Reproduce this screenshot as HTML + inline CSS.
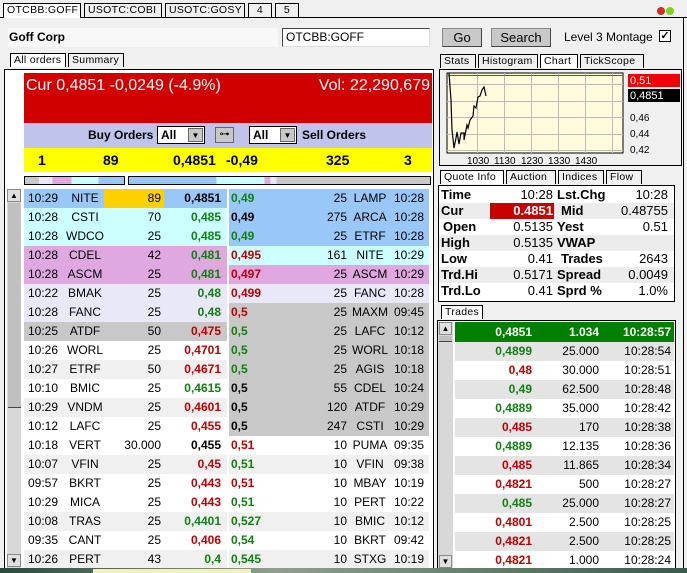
<!DOCTYPE html>
<html><head><meta charset="utf-8"><style>
*{box-sizing:border-box;margin:0;padding:0}
body{width:687px;height:573px;overflow:hidden;background:#f0f0f0;font-family:"Liberation Sans",sans-serif;font-size:12px;color:#000;position:relative}
.a{position:absolute}
.tab{position:absolute;height:14px;border:1px solid #000;border-bottom:none;background:#f0f0f0;font-size:10.5px;letter-spacing:0.3px;padding:0 3px;line-height:13px;white-space:nowrap;overflow:hidden}
.tab.sel{background:#fff}
.row{position:absolute;height:19px;line-height:19px;font-size:12px}
.row span{position:absolute;top:0}
.b{font-weight:bold}
.g{color:#108010}.r{color:#c00000}.k{color:#000}
.btn{position:absolute;background:#c8c8c8;border:1px solid #888;border-right-color:#444;border-bottom-color:#444;text-align:center;font-size:13px;line-height:17px}
.sel2{position:absolute;background:#fff;border:1px solid #000;height:18px;font-weight:bold;font-size:12px;line-height:16px;padding-left:3px}
.sel2 i{position:absolute;right:1px;top:1px;width:15px;height:14px;background:#c8c8c8;border:1px solid #666;font-style:normal;font-size:8px;text-align:center;line-height:13px}
.q{position:absolute;left:0;width:235px;height:16px;line-height:16px;font-size:13px}
.q span{position:absolute;top:0}
</style></head><body>
<div class="a" style="left:0;top:17px;width:687px;height:1px;background:#000"></div>
<div class="tab sel" style="left:3px;top:3px;width:78px;height:15px">OTCBB:GOFF</div>
<div class="tab" style="left:84px;top:3px;width:78px">USOTC:COBI</div>
<div class="tab" style="left:165px;top:3px;width:80px">USOTC:GOSY</div>
<div class="tab" style="left:248px;top:3px;width:24px;text-align:center">4</div>
<div class="tab" style="left:275px;top:3px;width:24px;text-align:center">5</div>
<div class="a" style="left:657px;top:7px;width:8px;height:8px;border-radius:50%;background:#d03020"></div>
<div class="a" style="left:666px;top:7px;width:8px;height:8px;border-radius:50%;background:#80d020"></div>
<div class="a" style="left:683px;top:18px;width:1px;height:555px;background:#000"></div>

<div class="a" style="left:8px;top:28px;width:270px;height:19px;background:#f8f8f8;font-weight:bold;font-size:12px;line-height:19px;padding-left:1px">Goff Corp</div>
<div class="a" style="left:282px;top:28px;width:148px;height:19px;background:#fff;border:1px solid #888;border-color:#444 #ddd #ddd #444;font-size:12px;line-height:17px;padding-left:3px">OTCBB:GOFF</div>
<div class="btn" style="left:442px;top:28px;width:40px;height:19px">Go</div>
<div class="btn" style="left:491px;top:28px;width:60px;height:19px">Search</div>
<div class="a" style="left:564px;top:29px;font-size:12px;line-height:17px">Level 3 Montage</div>
<div class="a" style="left:659px;top:30px;width:12px;height:12px;border:1px solid #000;background:#fff;font-size:11px;line-height:10px;text-align:center;font-weight:bold">✓</div>

<div class="tab sel" style="left:10px;top:53px;width:56px">All orders</div>
<div class="tab" style="left:68px;top:53px;width:56px">Summary</div>
<div class="a" style="left:4px;top:69px;width:430px;height:500px;border:1px solid #000;background:#fff"></div>
<div class="a" style="left:24px;top:73px;width:408px;height:50px;background:#d00000;color:#fff;font-size:16px"><span class="a" style="left:2px;top:4px">Cur 0,4851 -0,0249 (-4.9%)</span><span class="a" style="right:2px;top:4px">Vol: 22,290,679</span></div>
<div class="a" style="left:24px;top:123px;width:408px;height:25px;background:#c0c4ec"></div>
<div class="a b" style="left:88px;top:128px;font-size:12px">Buy Orders</div>
<div class="sel2" style="left:157px;top:126px;width:48px">All<i>▼</i></div>
<div class="a" style="left:215px;top:127px;width:19px;height:16px;background:#c8c8c8;border:1px solid #666;font-size:10px;text-align:center;line-height:14px">⊶</div>
<div class="sel2" style="left:249px;top:126px;width:48px">All<i>▼</i></div>
<div class="a b" style="left:302px;top:128px;font-size:12px">Sell Orders</div>
<div class="a b" style="left:24px;top:148px;width:408px;height:24px;background:#ffff00;font-size:14px;line-height:24px">
<span class="a" style="left:14px">1</span><span class="a" style="left:79px">89</span><span class="a" style="left:149px">0,4851</span><span class="a" style="left:202px">-0,49</span><span class="a" style="left:302px">325</span><span class="a" style="left:380px">3</span></div>
<div class="a" style="left:24px;top:176px;width:101px;height:9px;border:1px solid #000;background:linear-gradient(90deg,#c8c8c8 0 14%,#e8e8f8 14% 28%,#e0a8e0 28% 47%,#ccffff 47% 74%,#99c8f8 74%)"></div>
<div class="a" style="left:128px;top:176px;width:303px;height:9px;border:1px solid #000;background:linear-gradient(90deg,#99c8f8 0 29%,#ccffff 29% 45%,#e0a8e0 45% 47%,#e8e8f8 47% 49%,#c8c8c8 49%)"></div>
<div class="a" style="left:7px;top:189px;width:14px;height:380px;background:#d8d8d8"></div>
<div class="a" style="left:7px;top:189px;width:14px;height:13px;background:#e0e0e0;border:1px solid #888;font-size:8px;text-align:center;line-height:11px">▲</div>
<div class="a" style="left:8px;top:203px;width:13px;height:205px;background:#c0c0c0;border-bottom:1px solid #444"></div>
<div class="a" style="left:7px;top:554px;width:14px;height:13px;background:#e0e0e0;border:1px solid #888;font-size:8px;text-align:center;line-height:11px">▼</div>
<div id="rows"></div>

<div class="tab" style="left:440px;top:54px;width:36px">Stats</div>
<div class="tab" style="left:478px;top:54px;width:60px">Histogram</div>
<div class="tab sel" style="left:540px;top:54px;width:38px">Chart</div>
<div class="tab" style="left:580px;top:54px;width:64px">TickScope</div>
<div class="a" style="left:439px;top:69px;width:243px;height:97px;border:1px solid #000;background:#f0f0f0"></div>
<svg class="a" style="left:440px;top:70px" width="241" height="95">
<rect x="7" y="3" width="176" height="80" fill="#fffbdc" stroke="#000" stroke-width="1"/>
<g stroke="#bbb" stroke-width="1">
<line x1="37.5" y1="3" x2="37.5" y2="83"/><line x1="64.5" y1="3" x2="64.5" y2="83"/><line x1="91.5" y1="3" x2="91.5" y2="83"/><line x1="118.5" y1="3" x2="118.5" y2="83"/><line x1="145.5" y1="3" x2="145.5" y2="83"/><line x1="172.5" y1="3" x2="172.5" y2="83"/>
<line x1="7" y1="14.5" x2="183" y2="14.5"/><line x1="7" y1="31.5" x2="183" y2="31.5"/><line x1="7" y1="47.5" x2="183" y2="47.5"/><line x1="7" y1="64.5" x2="183" y2="64.5"/><line x1="7" y1="80.5" x2="183" y2="80.5"/></g>
<line x1="8" y1="5.5" x2="182" y2="5.5" stroke="#e02020"/>
<polyline fill="none" stroke="#000" stroke-width="1.2" points="9,3 11,30 12,60 14,78 16,68 17,62 19,74 21,63 24,63 24,70 27,55 28,58 30,50 33,46 34,36 36,38 38,27 40,26 42,20 44,17 46,26"/>
<rect x="188" y="4" width="52" height="13" fill="#f00000"/><text x="190" y="14" fill="#fff" font-size="11" font-family="Liberation Sans">0,51</text>
<rect x="188" y="19" width="52" height="13" fill="#000"/><text x="190" y="29" fill="#fff" font-size="11" font-family="Liberation Sans">0,4851</text>
<g font-size="10" font-family="Liberation Sans" fill="#000"><text x="190" y="51">0,46</text><text x="190" y="67">0,44</text><text x="190" y="83">0,42</text>
<text x="27" y="94">1030</text><text x="54" y="94">1130</text><text x="81" y="94">1230</text><text x="108" y="94">1330</text><text x="135" y="94">1430</text></g>
</svg>
<div class="tab sel" style="left:440px;top:170px;width:64px">Quote Info</div>
<div class="tab" style="left:506px;top:170px;width:50px">Auction</div>
<div class="tab" style="left:558px;top:170px;width:46px">Indices</div>
<div class="tab" style="left:606px;top:170px;width:36px">Flow</div>
<div class="a" style="left:438px;top:185px;width:237px;height:117px;border:1px solid #000;background:#fff">
<div class="q" style="top:1px"><span class="b" style="left:2px">Time</span><span style="right:121px">10:28</span><span class="b" style="left:118px">Lst.Chg</span><span style="right:6px">10:28</span></div>
<div class="q" style="top:17px;background:#ececec"><span class="a" style="left:51px;width:64px;height:16px;background:#c80000"></span><span class="b" style="left:2px">Cur</span><span class="b" style="right:121px;color:#fff">0.4851</span><span class="b" style="left:122px">Mid</span><span style="right:6px">0.48755</span></div>
<div class="q" style="top:33px"><span class="b" style="left:4px">Open</span><span style="right:121px">0.5135</span><span class="b" style="left:118px">Yest</span><span style="right:6px">0.51</span></div>
<div class="q" style="top:49px;background:#ececec"><span class="b" style="left:2px">High</span><span style="right:121px">0.5135</span><span class="b" style="left:118px">VWAP</span></div>
<div class="q" style="top:65px"><span class="b" style="left:2px">Low</span><span style="right:121px">0.41</span><span class="b" style="left:122px">Trades</span><span style="right:6px">2643</span></div>
<div class="q" style="top:81px;background:#ececec"><span class="b" style="left:2px">Trd.Hi</span><span style="right:121px">0.5171</span><span class="b" style="left:118px">Spread</span><span style="right:6px">0.0049</span></div>
<div class="q" style="top:97px"><span class="b" style="left:2px">Trd.Lo</span><span style="right:121px">0.41</span><span class="b" style="left:118px">Sprd %</span><span style="right:6px">1.0%</span></div>
</div>
<div class="tab sel" style="left:441px;top:305px;width:42px">Trades</div>
<div class="a" style="left:437px;top:320px;width:239px;height:250px;border:1px solid #000;background:#fff"></div>
<div class="a" style="left:438px;top:322px;width:15px;height:246px;background:#d8d8d8"></div>
<div class="a" style="left:439px;top:322px;width:13px;height:13px;background:#e0e0e0;border:1px solid #888;font-size:8px;text-align:center;line-height:11px">▲</div>
<div class="a" style="left:439px;top:336px;width:13px;height:6px;background:#c0c0c0;border-bottom:1px solid #444"></div>
<div class="a" style="left:439px;top:555px;width:13px;height:13px;background:#e0e0e0;border:1px solid #888;font-size:8px;text-align:center;line-height:11px">▼</div>
<div id="trades"></div>
<div class="a" style="left:0;top:568px;width:687px;height:5px;background:linear-gradient(90deg,#2a4a3a,#90a090 40%,#3a5a4a)"></div>
<div class="a" style="left:93px;top:569px;width:158px;height:4px;background:#f0f0c0"></div>
<script>
var L=[["10:29","NITE","89","0,4851","k","#99c8f8"],["10:28","CSTI","70","0,485","g","#ccffff"],["10:28","WDCO","25","0,485","g","#ccffff"],["10:28","CDEL","42","0,481","g","#e0a8e0"],["10:28","ASCM","25","0,481","g","#e0a8e0"],["10:22","BMAK","25","0,48","g","#e8e8f8"],["10:28","FANC","25","0,48","g","#e8e8f8"],["10:25","ATDF","50","0,475","r","#c8c8c8"],["10:26","WORL","25","0,4701","r","#fff"],["10:27","ETRF","50","0,4671","r","#f0f0f0"],["10:10","BMIC","25","0,4615","g","#fff"],["10:29","VNDM","25","0,4601","r","#f0f0f0"],["10:12","LAFC","25","0,455","r","#fff"],["10:18","VERT","30.000","0,455","k","#fff"],["10:07","VFIN","25","0,45","r","#f0f0f0"],["09:57","BKRT","25","0,443","r","#fff"],["10:29","MICA","25","0,443","r","#fff"],["10:08","TRAS","25","0,4401","g","#f0f0f0"],["09:35","CANT","25","0,406","r","#fff"],["10:26","PERT","43","0,4","g","#f0f0f0"]];
var R=[["0,49","g","25","LAMP","10:28","#99c8f8"],["0,49","k","275","ARCA","10:28","#99c8f8"],["0,49","g","25","ETRF","10:28","#99c8f8"],["0,495","r","161","NITE","10:29","#ccffff"],["0,497","r","25","ASCM","10:29","#e0a8e0"],["0,499","r","25","FANC","10:28","#e8e8f8"],["0,5","r","25","MAXM","09:45","#c8c8c8"],["0,5","g","25","LAFC","10:12","#c8c8c8"],["0,5","g","25","WORL","10:18","#c8c8c8"],["0,5","g","25","AGIS","10:18","#c8c8c8"],["0,5","k","55","CDEL","10:24","#c8c8c8"],["0,5","k","120","ATDF","10:29","#c8c8c8"],["0,5","k","247","CSTI","10:29","#c8c8c8"],["0,51","r","10","PUMA","09:35","#fff"],["0,51","g","10","VFIN","09:38","#f0f0f0"],["0,51","r","10","MBAY","10:19","#fff"],["0,51","g","10","PERT","10:22","#fff"],["0,527","g","10","BMIC","10:12","#f0f0f0"],["0,54","g","10","BKRT","09:42","#fff"],["0,545","g","10","STXG","10:19","#f0f0f0"]];
var h="";
for(var i=0;i<20;i++){var y=189+i*19,a=L[i],b=R[i];
h+='<div class="row" style="left:24px;top:'+y+'px;width:203px;background:'+a[5]+'">'+(i==0?'<span style="left:80px;width:60px;height:19px;background:#ffd000"></span>':'')+'<span style="left:4px">'+a[0]+'</span><span style="left:38px;width:46px;text-align:center">'+a[1]+'</span><span style="right:66px">'+a[2]+'</span><span class="b '+a[4]+'" style="right:6px">'+a[3]+'</span></div>';
h+='<div class="row" style="left:229px;top:'+y+'px;width:200px;background:'+b[5]+'"><span class="b '+b[1]+'" style="left:2px">'+b[0]+'</span><span style="right:82px">'+b[2]+'</span><span style="left:120px;width:42px;text-align:center">'+b[3]+'</span><span style="right:5px">'+b[4]+'</span></div>';}
document.getElementById("rows").innerHTML=h;
var T=[["0,4899","g","25.000","10:28:54"],["0,48","r","30.000","10:28:51"],["0,49","g","62.500","10:28:48"],["0,4889","g","35.000","10:28:42"],["0,485","r","170","10:28:38"],["0,4889","g","12.135","10:28:36"],["0,485","r","11.865","10:28:34"],["0,4821","r","500","10:28:27"],["0,485","g","25.000","10:28:27"],["0,4801","r","2.500","10:28:25"],["0,4821","r","2.500","10:28:25"],["0,4821","r","1.000","10:28:24"]];
var t='<div class="row b" style="left:455px;top:322px;width:219px;height:20px;line-height:20px;background:#008000;color:#fff"><span style="right:142px">0,4851</span><span style="right:75px">1.034</span><span style="right:3px">10:28:57</span></div>';
for(var j=0;j<12;j++){var r=T[j];t+='<div class="row" style="left:455px;top:'+(342+j*19)+'px;width:219px;background:'+(j%2==0?'#e4e4e4':'#fff')+'"><span class="b '+r[1]+'" style="right:142px">'+r[0]+'</span><span style="right:75px">'+r[2]+'</span><span style="right:3px">'+r[3]+'</span></div>';}
document.getElementById("trades").innerHTML=t;
</script>
</body></html>
